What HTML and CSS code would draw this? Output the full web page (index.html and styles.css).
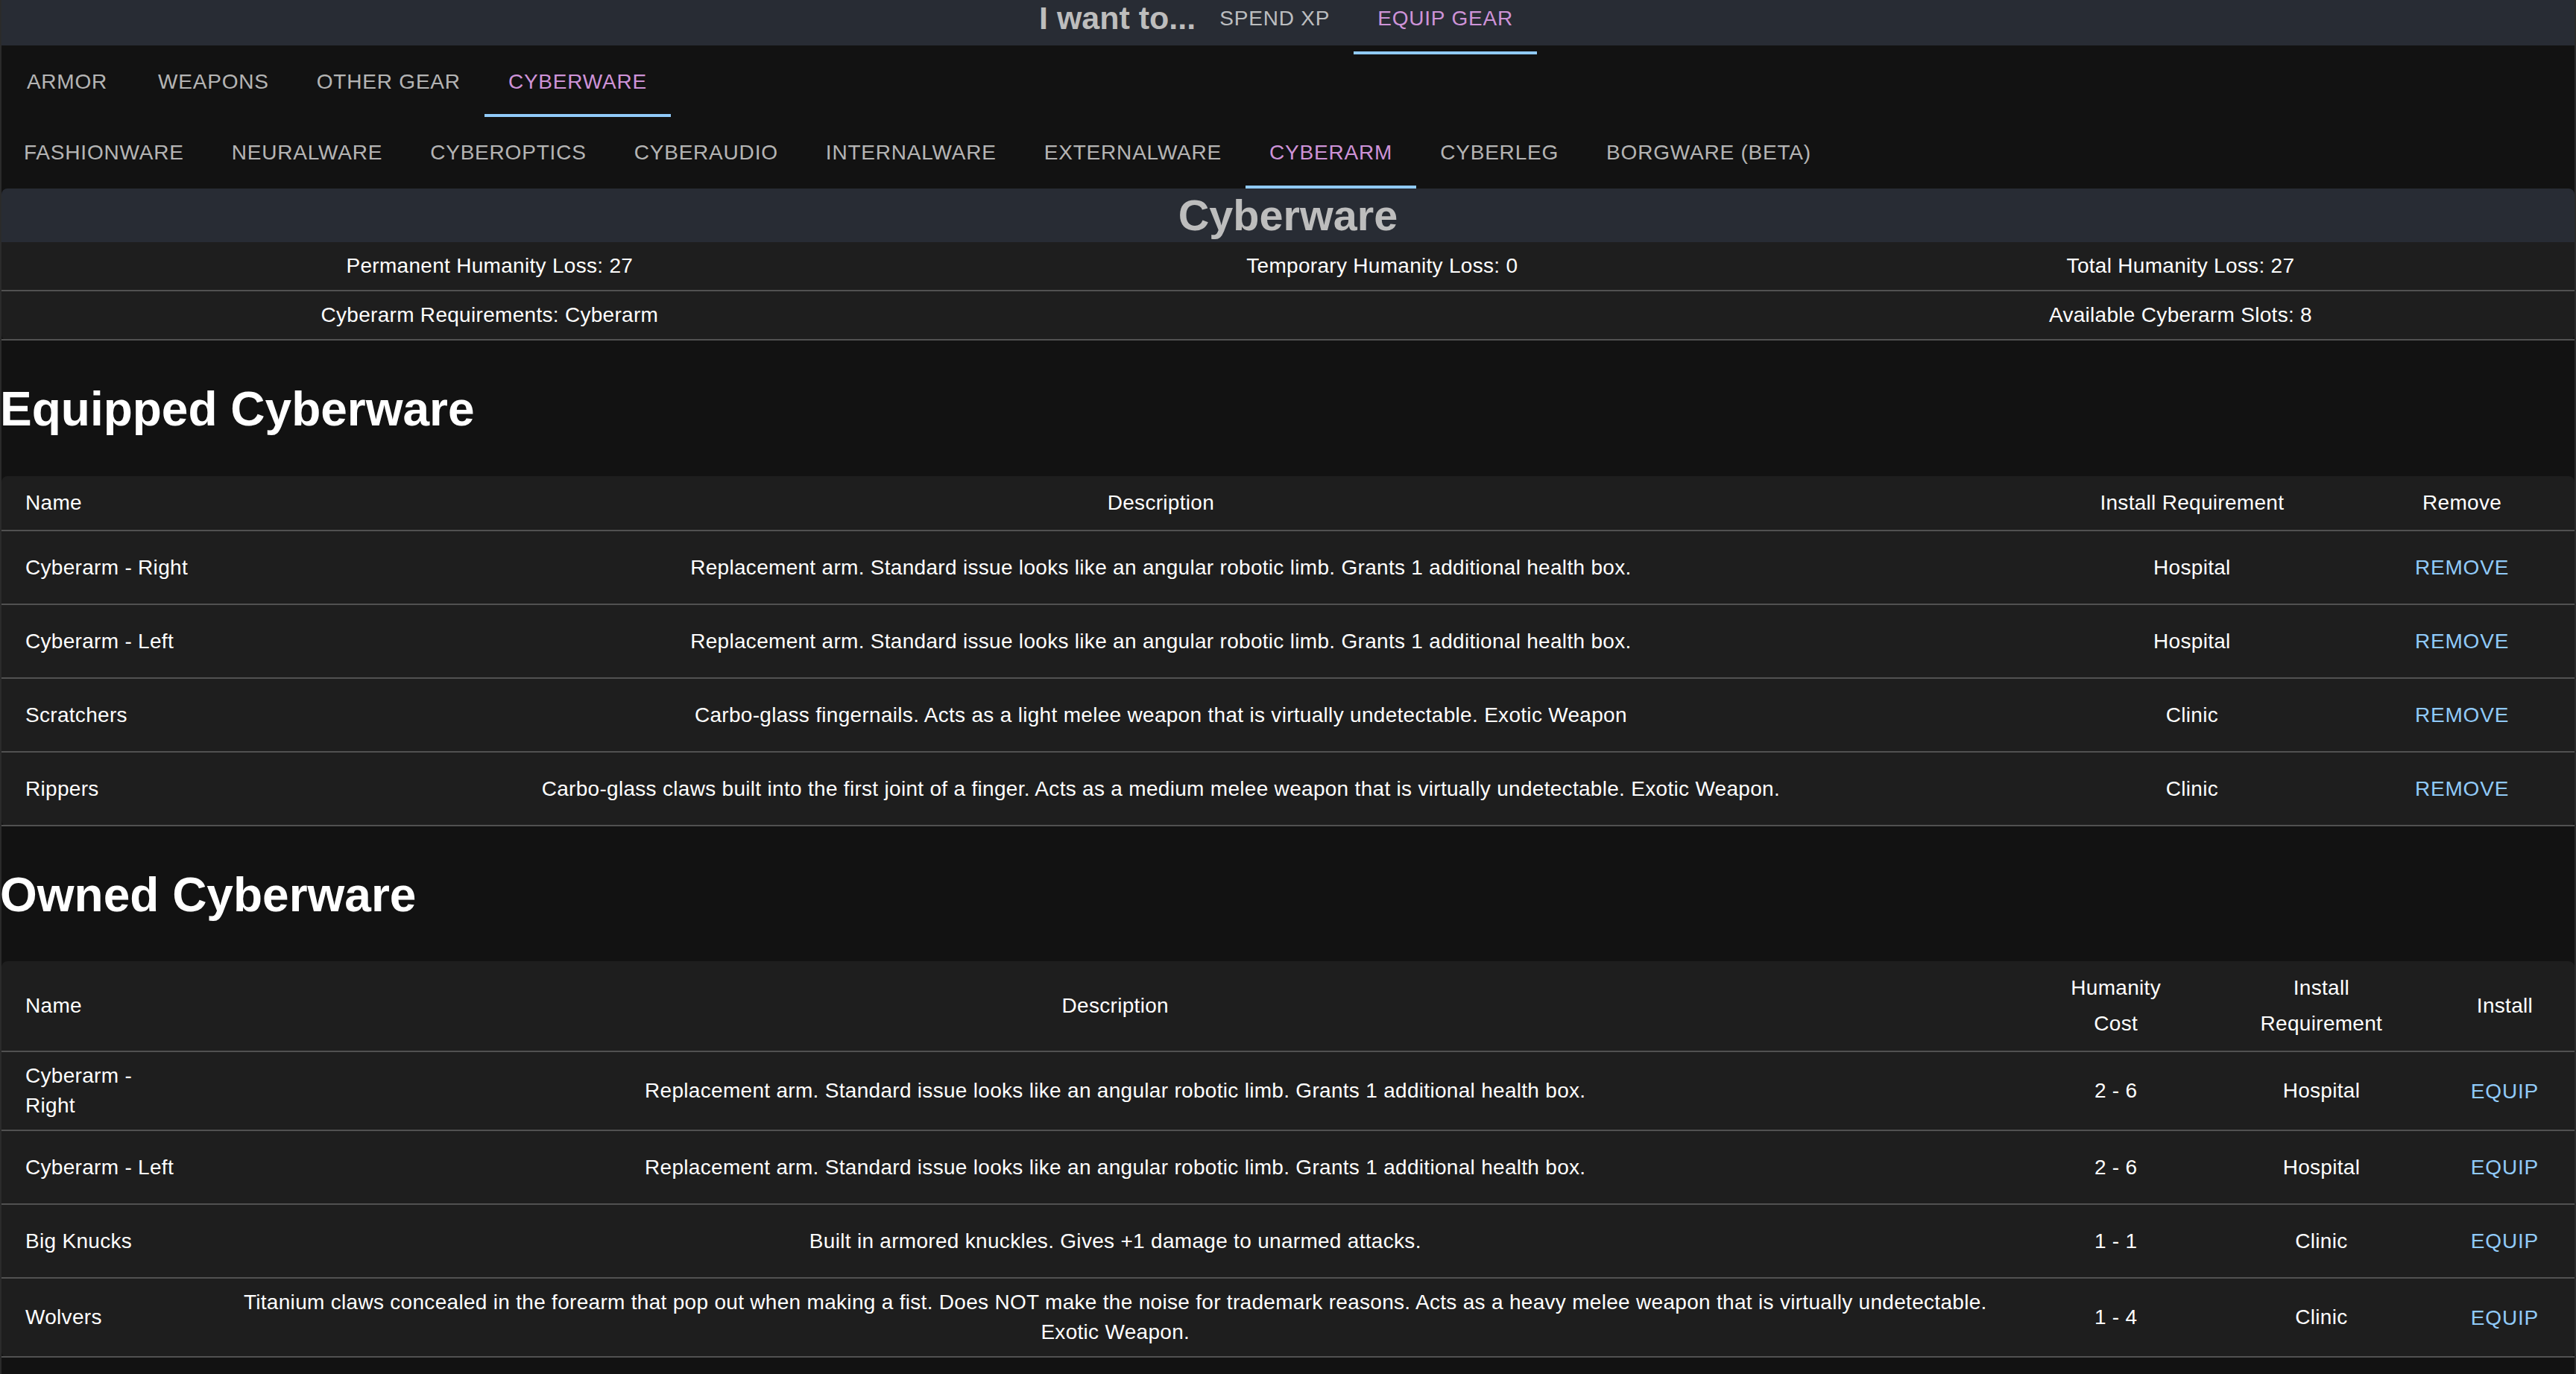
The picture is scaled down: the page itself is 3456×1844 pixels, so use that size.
FILE: index.html
```html
<!DOCTYPE html>
<html lang="en">
<head>
<meta charset="utf-8">
<title>Cyberware</title>
<link rel="stylesheet" href="styles.css">
</head>
<body>
<header class="topbar">
  <div class="title">I want to...</div>
  <nav class="tabs tabs-top">
    <div class="tab">Spend XP</div>
    <div class="tab selected">Equip Gear</div>
  </nav>
</header>
<nav class="tabs tabs-gear">
  <div class="tab">Armor</div>
  <div class="tab">Weapons</div>
  <div class="tab">Other Gear</div>
  <div class="tab selected">Cyberware</div>
</nav>
<nav class="tabs tabs-cyber">
  <div class="tab">Fashionware</div>
  <div class="tab">Neuralware</div>
  <div class="tab">Cyberoptics</div>
  <div class="tab">Cyberaudio</div>
  <div class="tab">Internalware</div>
  <div class="tab">Externalware</div>
  <div class="tab selected">Cyberarm</div>
  <div class="tab">Cyberleg</div>
  <div class="tab">Borgware (Beta)</div>
</nav>
<div class="section-bar">Cyberware</div>
<table class="grid stats">
  <tbody>
    <tr>
      <td>Permanent Humanity Loss: 27</td>
      <td>Temporary Humanity Loss: 0</td>
      <td>Total Humanity Loss: 27</td>
    </tr>
    <tr>
      <td>Cyberarm Requirements: Cyberarm</td>
      <td></td>
      <td>Available Cyberarm Slots: 8</td>
    </tr>
  </tbody>
</table>

<h1 class="heading">Equipped Cyberware</h1>
<table class="grid list">
  <thead>
    <tr>
      <th class="left">Name</th>
      <th>Description</th>
      <th>Install Requirement</th>
      <th>Remove</th>
    </tr>
  </thead>
  <tbody>
    <tr>
      <td class="left">Cyberarm - Right</td>
      <td>Replacement arm. Standard issue looks like an angular robotic limb. Grants 1 additional health box.</td>
      <td>Hospital</td>
      <td><span class="btn">Remove</span></td>
    </tr>
    <tr>
      <td class="left">Cyberarm - Left</td>
      <td>Replacement arm. Standard issue looks like an angular robotic limb. Grants 1 additional health box.</td>
      <td>Hospital</td>
      <td><span class="btn">Remove</span></td>
    </tr>
    <tr>
      <td class="left">Scratchers</td>
      <td>Carbo-glass fingernails. Acts as a light melee weapon that is virtually undetectable. Exotic Weapon</td>
      <td>Clinic</td>
      <td><span class="btn">Remove</span></td>
    </tr>
    <tr>
      <td class="left">Rippers</td>
      <td>Carbo-glass claws built into the first joint of a finger. Acts as a medium melee weapon that is virtually undetectable. Exotic Weapon.</td>
      <td>Clinic</td>
      <td><span class="btn">Remove</span></td>
    </tr>
  </tbody>
</table>

<h1 class="heading heading-owned">Owned Cyberware</h1>
<table class="grid list">
  <thead>
    <tr>
      <th class="left">Name</th>
      <th>Description</th>
      <th>Humanity Cost</th>
      <th>Install Requirement</th>
      <th>Install</th>
    </tr>
  </thead>
  <tbody>
    <tr>
      <td class="left">Cyberarm - Right</td>
      <td>Replacement arm. Standard issue looks like an angular robotic limb. Grants 1 additional health box.</td>
      <td>2 - 6</td>
      <td>Hospital</td>
      <td><span class="btn">Equip</span></td>
    </tr>
    <tr>
      <td class="left">Cyberarm - Left</td>
      <td>Replacement arm. Standard issue looks like an angular robotic limb. Grants 1 additional health box.</td>
      <td>2 - 6</td>
      <td>Hospital</td>
      <td><span class="btn">Equip</span></td>
    </tr>
    <tr>
      <td class="left">Big Knucks</td>
      <td>Built in armored knuckles. Gives +1 damage to unarmed attacks.</td>
      <td>1 - 1</td>
      <td>Clinic</td>
      <td><span class="btn">Equip</span></td>
    </tr>
    <tr>
      <td class="left">Wolvers</td>
      <td>Titanium claws concealed in the forearm that pop out when making a fist. Does NOT make the noise for trademark reasons. Acts as a heavy melee weapon that is virtually undetectable. Exotic Weapon.</td>
      <td>1 - 4</td>
      <td>Clinic</td>
      <td><span class="btn">Equip</span></td>
    </tr>
  </tbody>
</table>
</body>
</html>
```
FILE: styles.css
```css
html, body {
  margin: 0;
  padding: 0;
}

body {
  background: #121212;
  color: #ffffff;
  font-family: "Liberation Sans", Arial, Helvetica, sans-serif;
  box-shadow: inset 2px 0 0 #2b2b2b, inset -2px 0 0 #2b2b2b;
  min-height: 100vh;
}

/* ---------- top bar ---------- */
.topbar {
  height: 73px;
  margin: 0 2px;
  display: flex;
  justify-content: center;
  align-items: flex-start;
  background: linear-gradient(#282c34 0, #282c34 61px, transparent 61px);
}

.title {
  font-size: 43px;
  line-height: 48px;
  font-weight: bold;
  color: #bdbdbd;
}

/* ---------- tabs ---------- */
.tabs {
  display: flex;
}

.tab {
  box-sizing: border-box;
  min-width: 180px;
  padding: 0 32px;
  font-size: 28px;
  line-height: 49px;
  letter-spacing: 0.8px;
  text-transform: uppercase;
  text-align: center;
  color: rgba(255, 255, 255, 0.7);
  white-space: nowrap;
}

.tab.selected {
  color: #ce93d8;
  box-shadow: inset 0 -4px 0 #90caf9;
}

.tabs-top .tab {
  height: 73px;
}

.tabs-gear .tab {
  height: 84px;
  padding-top: 12px;
}

.tabs-cyber .tab {
  height: 96px;
  padding-top: 23px;
}

/* ---------- section bar ---------- */
.section-bar {
  margin: 0 2px;
  height: 72px;
  background: #282c34;
  border-radius: 8px 8px 0 0;
  text-align: center;
  font-size: 57.6px;
  line-height: 72px;
  font-weight: bold;
  color: #bdbdbd;
}

/* ---------- tables ---------- */
.grid {
  width: calc(100% - 4px);
  margin: 0 2px;
  border-collapse: separate;
  border-spacing: 0;
  background: #1e1e1e;
  border-radius: 8px;
}

.grid td,
.grid th {
  padding: 12px 32px;
  font-size: 28px;
  letter-spacing: 0.3px;
  text-align: center;
  vertical-align: middle;
  border-bottom: 2px solid #515151;
  color: #ffffff;
}

.grid td {
  line-height: 40px;
}

.grid th {
  line-height: 48px;
  font-weight: 500;
}

.stats {
  border-radius: 0 0 8px 8px;
}

.grid .left {
  text-align: left;
}

.btn {
  display: inline-block;
  padding: 12px 16px;
  font-size: 28px;
  line-height: 49px;
  letter-spacing: 0.8px;
  text-transform: uppercase;
  color: #90caf9;
  font-weight: 500;
  vertical-align: middle;
}

/* ---------- headings ---------- */
.heading {
  font-size: 64px;
  font-weight: bold;
  line-height: normal;
  margin: 55px 0 53px;
  color: #ffffff;
}

.heading-owned {
  margin: 55px 0 52px;
}
```
